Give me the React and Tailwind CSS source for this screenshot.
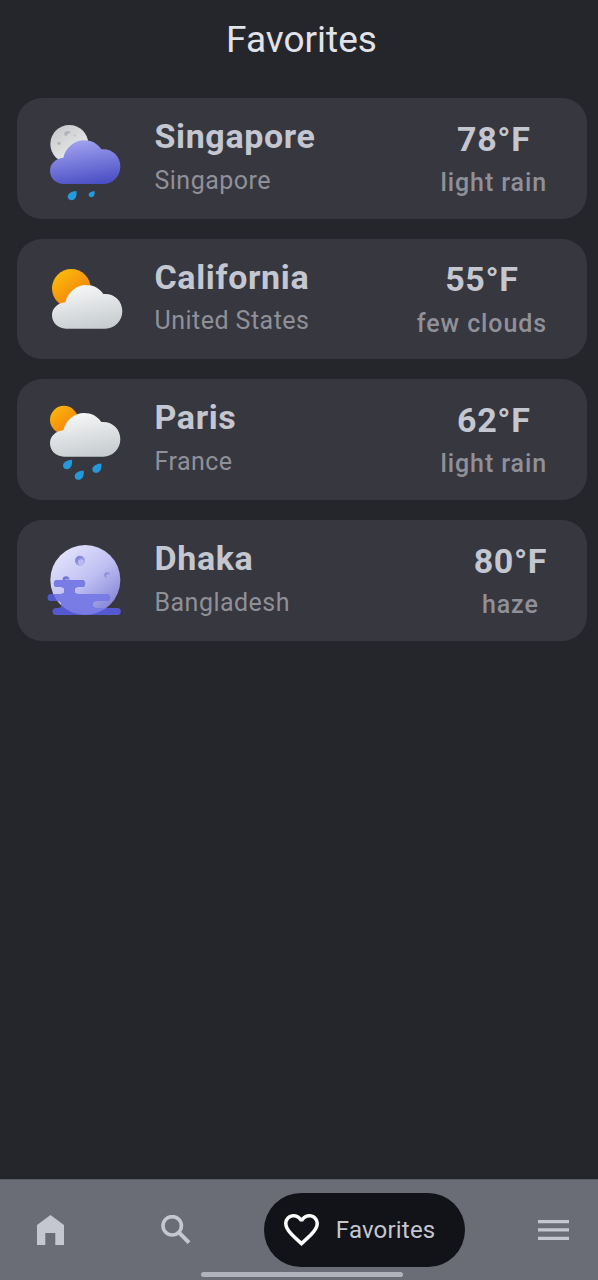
import React from "react";

const CLOUD =
  "M72 222 C48 222 30 204 30 182 C30 161 47 145 70 143 C78 112 104 91 132 91 C154 91 173 101 184 118 C217 115 241 139 241 170 C241 199 218 222 190 222 Z";

function Drop({ x, y, s = 1 }) {
  return (
    <path
      transform={`translate(${x} ${y}) scale(${s})`}
      d="M27 0 C12 1 0 8 0 17 C0 24 5 28 12 28 C23 28 29 16 27 0 Z"
      fill="#2499dc"
    />
  );
}

function Svg({ children }) {
  return (
    <svg viewBox="0 0 285 300" className="h-[100px] w-[95px] shrink-0" aria-hidden="true">
      {children}
    </svg>
  );
}

function NightRain() {
  return (
    <Svg>
      <defs>
        <linearGradient id="nr-moon" x1="0" y1="0" x2="0.7" y2="1">
          <stop offset="0" stopColor="#c3c5c8" />
          <stop offset="1" stopColor="#eeeeef" />
        </linearGradient>
        <linearGradient id="nr-cloud" x1="0.35" y1="0" x2="0.6" y2="1">
          <stop offset="0" stopColor="#a2a3ef" />
          <stop offset="1" stopColor="#4b50c5" />
        </linearGradient>
      </defs>
      <circle cx="88" cy="102" r="57" fill="url(#nr-moon)" />
      <path d="M72 72 C73 61 91 61 92 68 C85 67 82 78 76 78 Z" fill="#b0b4bd" />
      <circle cx="57" cy="100" r="5" fill="#b2b5ba" />
      <circle cx="104" cy="76" r="4" fill="#c8cace" />
      <path d={CLOUD} fill="url(#nr-cloud)" />
      <Drop x={83} y={243} s={0.98} />
      <Drop x={146} y={243} s={0.66} />
    </Svg>
  );
}

function FewClouds() {
  return (
    <Svg>
      <defs>
        <linearGradient id="fc-sun" x1="0.1" y1="0" x2="0.8" y2="0.9">
          <stop offset="0" stopColor="#fcc10c" />
          <stop offset="1" stopColor="#f07a0c" />
        </linearGradient>
        <linearGradient id="fc-cloud" x1="0.35" y1="0" x2="0.65" y2="1">
          <stop offset="0" stopColor="#f7f7f7" />
          <stop offset="1" stopColor="#c6ccd0" />
        </linearGradient>
      </defs>
      <g transform="translate(0 13)">
        <circle cx="94" cy="99" r="58" fill="url(#fc-sun)" />
        <path transform="translate(6 -2)" d={CLOUD} fill="url(#fc-cloud)" />
      </g>
    </Svg>
  );
}

function DayRain() {
  return (
    <Svg>
      <defs>
        <linearGradient id="dr-sun" x1="0.1" y1="0" x2="0.8" y2="0.9">
          <stop offset="0" stopColor="#fcb90c" />
          <stop offset="1" stopColor="#f2800c" />
        </linearGradient>
        <linearGradient id="dr-cloud" x1="0.35" y1="0" x2="0.65" y2="1">
          <stop offset="0" stopColor="#f7f7f7" />
          <stop offset="1" stopColor="#c6ccd0" />
        </linearGradient>
      </defs>
      <g transform="translate(0 11.4)">
        <circle cx="72" cy="75" r="42" fill="url(#dr-sun)" />
        <path transform="translate(0 -36.5)" d={CLOUD} fill="url(#dr-cloud)" />
        <Drop x={69} y={195} />
        <Drop x={104} y={227} />
        <Drop x={157} y={206} />
      </g>
    </Svg>
  );
}

function Haze() {
  return (
    <Svg>
      <defs>
        <linearGradient id="hz-moon" x1="0.2" y1="0.1" x2="0.85" y2="0.9">
          <stop offset="0" stopColor="#e0e0fb" />
          <stop offset="0.5" stopColor="#bfc0f2" />
          <stop offset="1" stopColor="#8586d6" />
        </linearGradient>
        <linearGradient id="hz-crater" x1="0.1" y1="0.1" x2="0.9" y2="0.9">
          <stop offset="0" stopColor="#7c7ed8" />
          <stop offset="1" stopColor="#a9aaeb" />
        </linearGradient>
        <clipPath id="hz-disc">
          <circle cx="136" cy="135" r="105" />
        </clipPath>
        <path
          id="hz-fog"
          d="M52 135 H125 A10.500 10.500 0 0 1 125 156 H114 A10.500 10.500 0 0 0 114 177 H199 A10.500 10.500 0 0 1 199 198 H168 A10.500 10.500 0 0 0 168 219 H232 A10.500 10.500 0 0 1 232 240 H48 A10.500 10.500 0 0 1 48 219 H54 A10.500 10.500 0 0 0 54 198 H33 A10.500 10.500 0 0 1 33 177 H63 A10.500 10.500 0 0 0 63 156 H52 A10.500 10.500 0 0 1 52 135 Z"
        />
      </defs>
      <g transform="translate(0 9)">
        <circle cx="136" cy="135" r="105" fill="url(#hz-moon)" />
        <circle cx="120" cy="77" r="15" fill="url(#hz-crater)" />
        <circle cx="123" cy="82" r="9" fill="#b9baf0" />
        <circle cx="201" cy="120" r="8" fill="#8a8cdd" />
        <circle cx="204" cy="123" r="6" fill="#adaeea" />
        <circle cx="78" cy="134" r="10" fill="#7476d4" />
        <circle cx="81" cy="138" r="7" fill="#a5a7ea" />
        <use href="#hz-fog" fill="#5459cf" />
        <use href="#hz-fog" fill="#797ce4" clipPath="url(#hz-disc)" />
      </g>
    </Svg>
  );
}

const PLACES = [
  { city: "Singapore", country: "Singapore", temp: "78°F", sky: "light rain", Icon: NightRain },
  { city: "California", country: "United States", temp: "55°F", sky: "few clouds", Icon: FewClouds },
  { city: "Paris", country: "France", temp: "62°F", sky: "light rain", Icon: DayRain },
  { city: "Dhaka", country: "Bangladesh", temp: "80°F", sky: "haze", Icon: Haze },
];

function PlaceCard({ city, country, temp, sky, Icon }) {
  return (
    <li className="flex h-[120.500px] items-start rounded-[25px] bg-[#37373f] pl-[23px] pr-10">
      <div className="pt-3">
        <Icon />
      </div>
      <div className="ml-[19.500px] flex-1 pt-[18px]">
        <h2 className="text-[34px] font-bold leading-10 tracking-[0.620px] text-[#c4c6d0]">{city}</h2>
        <p className="mt-[9.500px] text-[25px] leading-[30px] tracking-[0.470px] text-[#909099]">{country}</p>
      </div>
      <div className="pt-[20.500px] text-center">
        <p className="text-[34px] font-bold leading-10 tracking-[0.600px] text-[#c4c6d0]">{temp}</p>
        <p className="mt-[9.400px] text-[25px] font-medium leading-[30px] tracking-[0.900px] text-[#909099]">{sky}</p>
      </div>
    </li>
  );
}

export default function App() {
  return (
    <div className="flex h-[1280px] w-[598px] flex-col overflow-hidden bg-[#25262b] font-['Roboto',sans-serif]">
      <header className="flex h-[98px] shrink-0 justify-center pl-[5px] pt-[17px]">
        <h1 className="text-[37px] leading-[46px] text-[#e2e2e9]">Favorites</h1>
      </header>
      <ul className="flex flex-1 flex-col gap-[20.200px] pl-[17px] pr-[11px]">
        {PLACES.map((place) => (
          <PlaceCard key={place.city} {...place} />
        ))}
      </ul>
      <nav className="relative flex h-[101px] shrink-0 items-center justify-between border-t border-[#5a5c64] bg-[#6a6d75] pl-[37px] pr-[29px]">
        <button aria-label="Home">
          <svg viewBox="0 0 27 30" className="h-[30px] w-[27px]" fill="#c4c6d0">
            <path d="M13.500 0 L27 10 V30 H18.300 V18 H8.300 V30 H0 V10 Z" />
          </svg>
        </button>
        <button aria-label="Search" className="ml-6">
          <svg viewBox="0 0 30 30" className="h-[30px] w-[30px]" fill="none" stroke="#c4c6d0" strokeWidth="3.600">
            <circle cx="11.200" cy="10.800" r="9.200" />
            <path d="M17.800 17.400 L28 27.600" strokeWidth="4" />
          </svg>
        </button>
        <button className="ml-px flex h-[74px] w-[201px] items-center rounded-full bg-[#111318] pl-5">
          <svg viewBox="2 3 20 18.350" className="h-8 w-[35px] shrink-0" fill="#ffffff">
            <path d="M16.500 3c-1.740 0-3.410.81-4.500 2.090C10.910 3.810 9.240 3 7.500 3 4.420 3 2 5.420 2 8.500c0 3.780 3.400 6.860 8.550 11.540L12 21.350l1.450-1.320C18.600 15.360 22 12.280 22 8.500 22 5.420 19.580 3 16.500 3zm-4.400 15.550l-.1.1-.1-.1C7.140 14.240 4 11.390 4 8.500 4 6.500 5.500 5 7.500 5c1.540 0 3.040.99 3.570 2.360h1.870C13.460 5.990 14.960 5 16.500 5c2 0 3.500 1.500 3.500 3.500 0 2.890-3.140 5.740-7.900 10.050z" />
          </svg>
          <span className="ml-[16.500px] text-[24px] tracking-[0.200px] text-[#c4c6d0]">Favorites</span>
        </button>
        <button aria-label="Menu">
          <svg viewBox="0 0 31 20" className="h-5 w-[31px]" fill="#c4c6d0">
            <path d="M0 0H31V3.300H0Z M0 8.300H31V11.600H0Z M0 16.700H31V20H0Z" />
          </svg>
        </button>
        <div className="absolute bottom-[3px] left-[201px] h-[5px] w-[202px] rounded-full bg-[#b0b3bd]" />
      </nav>
    </div>
  );
}
